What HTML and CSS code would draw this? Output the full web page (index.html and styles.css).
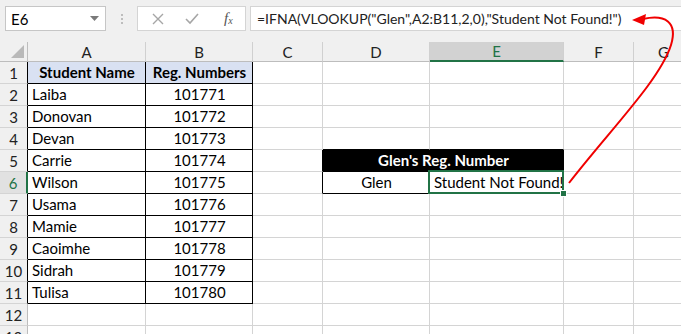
FILE: index.html
```html
<!DOCTYPE html>
<html lang="en">
<head>
    <meta charset="UTF-8">
    <title>IFNA VLOOKUP</title>
    <link rel="stylesheet" href="styles.css">
</head>
<body>

    <div class="toolbar">
        <div class="namebox">
            <span>E6</span>
            <svg class="drop" width="9" height="5" viewBox="0 0 9 5"><path d="M0 0h9L4.5 5z" fill="#7a7a7a"/></svg>
        </div>
        <div class="grip"><i></i><i></i><i></i></div>
        <div class="fbuttons">
            <svg width="12" height="12" viewBox="0 0 12 12"><path d="M1 1l10 10M11 1L1 11" stroke="#a6a6a6" stroke-width="1.4" fill="none"/></svg>
            <svg width="14" height="12" viewBox="0 0 14 12"><path d="M1 6l4 4 8-9" stroke="#a6a6a6" stroke-width="1.6" fill="none"/></svg>
            <span class="fx">f<sub>x</sub></span>
        </div>
        <div class="formula">=IFNA(VLOOKUP("Glen",A2:B11,2,0),"Student Not Found!")</div>
    </div>

    <div class="sheet">
        <!-- header row -->
        <div class="corner"><svg width="13" height="13" viewBox="0 0 13 13"><path d="M13 0v13H0z" fill="#b9b9b9"/></svg></div>
        <div class="ch">A</div>
        <div class="ch">B</div>
        <div class="ch">C</div>
        <div class="ch">D</div>
        <div class="ch sel">E</div>
        <div class="ch">F</div>
        <div class="ch">G</div>

        <div class="rh tl">1</div>
        <div class="c tb hd">Student Name</div>
        <div class="c tb hd">Reg. Numbers</div>
        <div class="c"></div><div class="c"></div><div class="c"></div><div class="c"></div><div class="c"></div>

        <div class="rh tl">2</div>
        <div class="c tb">Laiba</div>
        <div class="c tb num">101771</div>
        <div class="c"></div><div class="c"></div><div class="c"></div><div class="c"></div><div class="c"></div>

        <div class="rh tl">3</div>
        <div class="c tb">Donovan</div>
        <div class="c tb num">101772</div>
        <div class="c"></div><div class="c"></div><div class="c"></div><div class="c"></div><div class="c"></div>

        <div class="rh tl">4</div>
        <div class="c tb">Devan</div>
        <div class="c tb num">101773</div>
        <div class="c"></div><div class="c black-bottom"></div><div class="c black-bottom"></div><div class="c"></div><div class="c"></div>

        <div class="rh tl">5</div>
        <div class="c tb">Carrie</div>
        <div class="c tb num">101774</div>
        <div class="c black-right"></div>
        <div class="c merged">Glen's Reg. Number</div>
        <div class="c"></div><div class="c"></div>

        <div class="rh tl cur">6</div>
        <div class="c tb">Wilson</div>
        <div class="c tb num">101775</div>
        <div class="c black-right"></div>
        <div class="c tb num">Glen</div>
        <div class="c tb num active">Student Not Found!</div>
        <div class="c"></div><div class="c"></div>

        <div class="rh tl">7</div>
        <div class="c tb">Usama</div>
        <div class="c tb num">101776</div>
        <div class="c"></div><div class="c"></div><div class="c"></div><div class="c"></div><div class="c"></div>

        <div class="rh tl">8</div>
        <div class="c tb">Mamie</div>
        <div class="c tb num">101777</div>
        <div class="c"></div><div class="c"></div><div class="c"></div><div class="c"></div><div class="c"></div>

        <div class="rh tl">9</div>
        <div class="c tb">Caoimhe</div>
        <div class="c tb num">101778</div>
        <div class="c"></div><div class="c"></div><div class="c"></div><div class="c"></div><div class="c"></div>

        <div class="rh tl">10</div>
        <div class="c tb">Sidrah</div>
        <div class="c tb num">101779</div>
        <div class="c"></div><div class="c"></div><div class="c"></div><div class="c"></div><div class="c"></div>

        <div class="rh tl">11</div>
        <div class="c tb">Tulisa</div>
        <div class="c tb num">101780</div>
        <div class="c"></div><div class="c"></div><div class="c"></div><div class="c"></div><div class="c"></div>

        <div class="rh">12</div>
        <div class="c"></div><div class="c"></div><div class="c"></div><div class="c"></div><div class="c"></div><div class="c"></div><div class="c"></div>

        <div class="rh">13</div>
        <div class="c"></div><div class="c"></div><div class="c"></div><div class="c"></div><div class="c"></div><div class="c"></div><div class="c"></div>
    </div>

    <!-- red annotation arrow -->
    <svg class="arrow" width="681" height="334" viewBox="0 0 681 334">
        <path d="M569 183 C610 130, 660 80, 671 45 C678 22, 665 14, 643 19" stroke="#f00000" stroke-width="2" fill="none"/>
        <path d="M632 20 L646 14 L644 25 z" fill="#f00000"/>
    </svg>

</body>
</html>
```

FILE: styles.css
```css
body {
    margin: 0;
    width: 681px;
    height: 334px;
    overflow: hidden;
    position: relative;
    font-family: Lato, "Open Sans", sans-serif;
    font-size: 15px;
    color: #000;
    background-color: #ffffff;
}

.toolbar {
    height: 42px;
    background-color: #f0f0f0;
    display: flex;
    align-items: flex-start;
    padding-top: 6px;
    box-sizing: border-box;
}

.namebox {
    margin-left: 5px;
    width: 101px;
    height: 25px;
    box-sizing: border-box;
    border: 1px solid #c6c6c6;
    background-color: #ffffff;
    display: flex;
    align-items: center;
    justify-content: space-between;
    padding: 0 6px 0 5px;
}

.grip {
    width: 31px;
    height: 25px;
    display: flex;
    flex-direction: column;
    align-items: center;
    justify-content: center;
    gap: 2px;
}

.grip i {
    width: 2px;
    height: 2px;
    background-color: #bdbdbd;
}

.fbuttons {
    width: 109px;
    height: 25px;
    box-sizing: border-box;
    border: 1px solid #d4d4d4;
    background-color: #ffffff;
    display: flex;
    align-items: center;
    gap: 21px;
    padding-left: 14px;
}

.fx {
    font-family: "Liberation Serif", serif;
    font-style: italic;
    font-size: 15px;
    color: #555;
    margin-left: 4px;
}

.fx sub {
    font-size: 10px;
    vertical-align: -1px;
}

.formula {
    margin-left: 4px;
    flex: 1;
    height: 25px;
    box-sizing: border-box;
    border: 1px solid #d4d4d4;
    border-right: none;
    background-color: #ffffff;
    padding-left: 6px;
    display: flex;
    align-items: center;
    white-space: nowrap;
    font-size: 14px;
    color: #222;
}

.sheet {
    display: grid;
    grid-template-columns: 28px 118px 107px 70px 107px 134px 70px 60px;
    grid-template-rows: 20px repeat(13, 22px);
}

.sheet > div {
    box-sizing: border-box;
    white-space: nowrap;
}

.corner {
    background-color: #f0f0f0;
    border-right: 1px solid #bdbdbd;
    border-bottom: 1px solid #bdbdbd;
    display: flex;
    align-items: flex-end;
    justify-content: flex-end;
    padding: 0 3px 3px 0;
}

.ch {
    background-color: #f0f0f0;
    border-right: 1px solid #d0d0d0;
    border-bottom: 1px solid #bdbdbd;
    text-align: center;
    line-height: 20px;
    color: #222;
}

.ch.sel {
    background-color: #d2d2d2;
    border-bottom: 2px solid #217346;
    color: #217346;
    line-height: 19px;
}

.rh {
    background-color: #f0f0f0;
    border-right: 1px solid #bdbdbd;
    border-bottom: 1px solid #d4d4d4;
    text-align: center;
    line-height: 22px;
    color: #222;
}

.rh.tl {
    border-right-color: #000;
}

.rh.cur {
    color: #217346;
    background-color: #e1e1e1;
    border-right: 2px solid #217346;
}

.c {
    border-right: 1px solid #d4d4d4;
    border-bottom: 1px solid #d4d4d4;
    display: flex;
    align-items: flex-end;
    padding: 0 3px 2px 4px;
    line-height: 18px;
}

.tb {
    border-right-color: #000;
    border-bottom-color: #000;
}

.hd {
    background-color: #d9e1f2;
    font-weight: bold;
    justify-content: center;
}

.num {
    justify-content: center;
}

.black-bottom {
    border-bottom-color: #000;
}

.black-right {
    border-right-color: #000;
}

.merged {
    grid-column: span 2;
    background-color: #000;
    color: #fff;
    font-weight: bold;
    justify-content: center;
    border-right-color: #000;
    border-bottom-color: #000;
}

.active {
    position: relative;
    justify-content: flex-start;
}

.active::after {
    content: "";
    position: absolute;
    left: -2px;
    top: -2px;
    right: -1px;
    bottom: -1px;
    border: 2px solid #217346;
}

.active::before {
    content: "";
    position: absolute;
    right: -4px;
    bottom: -4px;
    width: 5px;
    height: 5px;
    background-color: #217346;
    border: 1px solid #fff;
    z-index: 1;
}

.arrow {
    position: absolute;
    left: 0;
    top: 0;
    pointer-events: none;
}
```
